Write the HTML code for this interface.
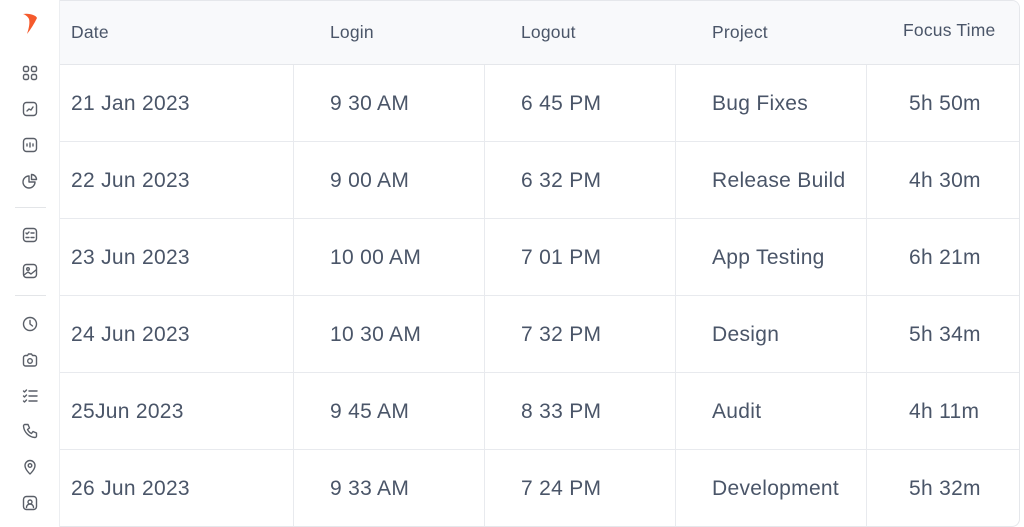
<!DOCTYPE html>
<html><head><meta charset="utf-8"><style>
body{margin:0;width:1024px;height:527px;background:#fff;font-family:"Liberation Sans",sans-serif;position:relative;overflow:hidden;color:#4a5568}
.sb{position:absolute;left:0;top:0;width:59px;height:527px;background:#fff;border-right:1px solid #eceef1}
.tbl{position:absolute;left:60px;top:0px;width:959px;height:525px;border:1px solid #e5e7eb;border-left:none;border-radius:0 8px 8px 0;overflow:hidden}
.hd{position:absolute;left:0;top:0;width:100%;height:63px;background:#f8f9fb;border-bottom:1px solid #e5e7eb}
.t{position:absolute;white-space:nowrap}
.h{font-size:17.5px;top:21px;letter-spacing:0.2px}
.c{font-size:21px;letter-spacing:0.3px}
.hl{position:absolute;left:0;width:100%;height:1px;background:#e8eaee}
.vl{position:absolute;top:64px;bottom:0;width:1px;background:#e8eaee}
svg.i{position:absolute;left:22px;width:16px;height:16px;fill:none;stroke:#5a5f68;stroke-width:1.4;stroke-linecap:round;stroke-linejoin:round}
.dv{position:absolute;left:15px;width:31px;height:1px;background:#e3e5e8}
</style></head><body>
<div class="sb">
<svg style="position:absolute;left:23px;top:13px" width="15" height="22" viewBox="0 0 15 22"><path d="M0 1 C6 0 13 2 14 5 C11 11 8 16 4 21 C6 15 7 10 6 6 C5 4 3 2 0 1Z" fill="#f55a2c"/></svg>
<svg class="i" style="top:65px" viewBox="0 0 16 16"><rect x="1.5" y="1.5" width="5" height="5" rx="1.5"/><rect x="9.5" y="1.5" width="5" height="5" rx="1.5"/><rect x="1.5" y="9.5" width="5" height="5" rx="1.5"/><rect x="9.5" y="9.5" width="5" height="5" rx="1.5"/></svg>
<svg class="i" style="top:101px" viewBox="0 0 16 16"><rect x="1.5" y="1.5" width="13" height="13" rx="3"/><path d="M5 10l2-2 2 1 2-3"/></svg>
<svg class="i" style="top:137px" viewBox="0 0 16 16"><rect x="1.5" y="1.5" width="13" height="13" rx="3"/><path d="M5 7v2M8 6v4M11 7v2"/></svg>
<svg class="i" style="top:173px" viewBox="0 0 16 16"><path d="M7 3a6 6 0 1 0 6 6H7z"/><path d="M9.5 1.5a5 5 0 0 1 5 5h-5z"/></svg>
<div class="dv" style="top:207px"></div>
<svg class="i" style="top:227px" viewBox="0 0 16 16"><rect x="1.5" y="1.5" width="13" height="13" rx="3"/><path d="M4 6l1 1 2-2M9 6h3M4 10.5h3M9 10.5h3"/></svg>
<svg class="i" style="top:263px" viewBox="0 0 16 16"><rect x="1.5" y="1.5" width="13" height="13" rx="3"/><circle cx="6" cy="6" r="1.3"/><path d="M2 12l4-3 3 2 5-4"/></svg>
<div class="dv" style="top:295px"></div>
<svg class="i" style="top:316px" viewBox="0 0 16 16"><circle cx="8" cy="8" r="6.5"/><path d="M8 4.5V8l2.5 2"/></svg>
<svg class="i" style="top:352px" viewBox="0 0 16 16"><path d="M1.5 5.5a2 2 0 0 1 2-2h2l1-1.5h3l1 1.5h2a2 2 0 0 1 2 2v6.5a2 2 0 0 1-2 2h-9a2 2 0 0 1-2-2z"/><circle cx="8" cy="9" r="2.3"/></svg>
<svg class="i" style="top:388px" viewBox="0 0 16 16"><path d="M7 3h8M7 8h8M7 13h8M1.5 3l1 1 2-2M1.5 8l1 1 2-2M1.5 13l1 1 2-2"/></svg>
<svg class="i" style="top:423px" viewBox="0 0 16 16"><path d="M3 1.5h3l1.5 3.5-2 1.5a8 8 0 0 0 4 4l1.5-2 3.5 1.5v3a1.5 1.5 0 0 1-1.5 1.5A12.5 12.5 0 0 1 1.5 3 1.5 1.5 0 0 1 3 1.5z"/></svg>
<svg class="i" style="top:459px" viewBox="0 0 16 16"><path d="M8 15s5-4.5 5-8.5a5 5 0 0 0-10 0C3 10.5 8 15 8 15z"/><circle cx="8" cy="6.5" r="1.8"/></svg>
<svg class="i" style="top:495px" viewBox="0 0 16 16"><rect x="1.5" y="1.5" width="13" height="13" rx="3"/><circle cx="8" cy="7" r="2"/><path d="M4.5 12.5a3.5 3.5 0 0 1 7 0"/></svg>
</div>
<div class="tbl">
<div class="hd"></div>
<div class="t h" style="left:11px">Date</div>
<div class="t h" style="left:270px">Login</div>
<div class="t h" style="left:461px">Logout</div>
<div class="t h" style="left:652px">Project</div>
<div class="t h" style="left:843px;top:19px">Focus Time</div>
<div class="hl" style="top:140px"></div><div class="hl" style="top:217px"></div><div class="hl" style="top:294px"></div><div class="hl" style="top:371px"></div><div class="hl" style="top:448px"></div>
<div class="vl" style="left:233px"></div><div class="vl" style="left:424px"></div><div class="vl" style="left:615px"></div><div class="vl" style="left:806px"></div>
<div class="t c" style="left:11px;top:91px">21 Jan 2023</div><div class="t c" style="left:270px;top:91px">9 30 AM</div><div class="t c" style="left:461px;top:91px">6 45 PM</div><div class="t c" style="left:652px;top:91px">Bug Fixes</div><div class="t c" style="left:849px;top:91px">5h 50m</div>
<div class="t c" style="left:11px;top:168px">22 Jun 2023</div><div class="t c" style="left:270px;top:168px">9 00 AM</div><div class="t c" style="left:461px;top:168px">6 32 PM</div><div class="t c" style="left:652px;top:168px">Release Build</div><div class="t c" style="left:849px;top:168px">4h 30m</div>
<div class="t c" style="left:11px;top:245px">23 Jun 2023</div><div class="t c" style="left:270px;top:245px">10 00 AM</div><div class="t c" style="left:461px;top:245px">7 01 PM</div><div class="t c" style="left:652px;top:245px">App Testing</div><div class="t c" style="left:849px;top:245px">6h 21m</div>
<div class="t c" style="left:11px;top:322px">24 Jun 2023</div><div class="t c" style="left:270px;top:322px">10 30 AM</div><div class="t c" style="left:461px;top:322px">7 32 PM</div><div class="t c" style="left:652px;top:322px">Design</div><div class="t c" style="left:849px;top:322px">5h 34m</div>
<div class="t c" style="left:11px;top:399px">25Jun 2023</div><div class="t c" style="left:270px;top:399px">9 45 AM</div><div class="t c" style="left:461px;top:399px">8 33 PM</div><div class="t c" style="left:652px;top:399px">Audit</div><div class="t c" style="left:849px;top:399px">4h 11m</div>
<div class="t c" style="left:11px;top:476px">26 Jun 2023</div><div class="t c" style="left:270px;top:476px">9 33 AM</div><div class="t c" style="left:461px;top:476px">7 24 PM</div><div class="t c" style="left:652px;top:476px">Development</div><div class="t c" style="left:849px;top:476px">5h 32m</div>
</div>
</body></html>
